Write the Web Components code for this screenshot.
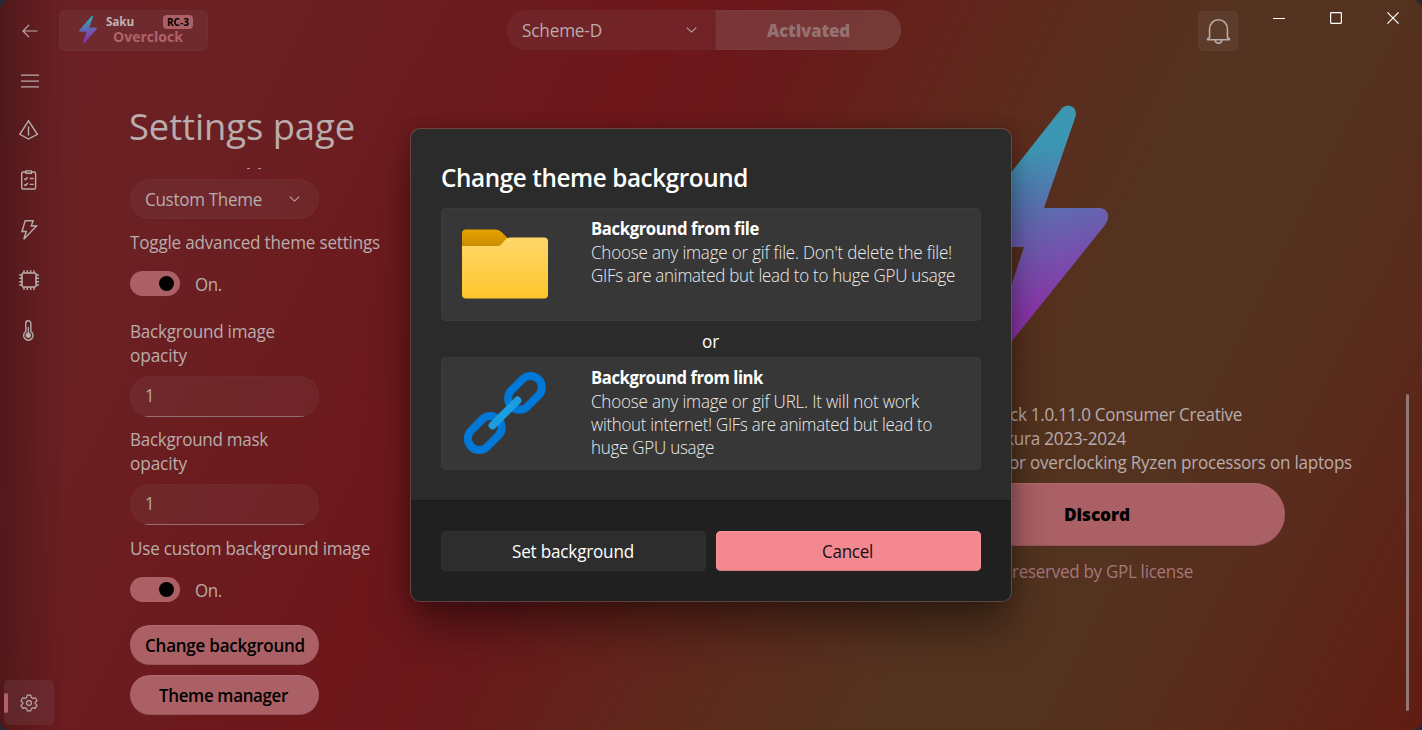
<!DOCTYPE html>
<html lang="en">
<head>
<meta charset="utf-8">
<title>Saku Overclock</title>
<style>
html,body{margin:0;height:100%;overflow:hidden;background:#262b31}
body{font-family:"Open Sans","Noto Sans",sans-serif;font-size:17.5px;line-height:24px;color:#b8acac}
</style>
</head>
<body>
<saku-window></saku-window>
<script>
const define=(name,html,Base=HTMLElement)=>{
  const t=document.createElement('template');t.innerHTML=html;
  customElements.define(name,class extends Base{
    constructor(){super();this.attachShadow({mode:'open'}).append(t.content.cloneNode(true));}
  });
};

/* One line of text set to a given advance width: part by glyph width, part by tracking. */
class FitText extends HTMLElement{
  constructor(){
    super();
    this.attachShadow({mode:'open'}).innerHTML='<style>:host{display:block;white-space:nowrap;flex:none}span{display:inline-block;transform-origin:0 50%}</style><span><slot></slot></span>';
  }
  connectedCallback(){
    const w=+this.getAttribute('w'),s=this.shadowRoot.querySelector('span');
    this.style.width=w+'px';
    const n=s.getBoundingClientRect().width;
    if(!n)return;
    const k=Math.sqrt(w/n);
    s.style.letterSpacing=((w/k-n)/this.textContent.length)+'px';
    s.style.transform=`scaleX(${k})`;
  }
}

/* Icon set, chosen with the name attribute. */
const bolt=id=>`<path fill="url(#${id})" d="M101 3C107-3 118 2 114 13L83 103H138C147 103 150 112 144 120L47 241C40 248 30 242 33 233L63 142H9C0 142-2 134 3 127Z"/>`;
const grad=id=>`<defs><linearGradient id="${id}" gradientUnits="userSpaceOnUse" x1="70" y1="45" x2="114" y2="194"><stop stop-color="#3c97b3"/><stop offset=".5" stop-color="#6663b0"/><stop offset="1" stop-color="#8a36a8"/></linearGradient></defs>`;
const ICONS={
 back:['0 0 16 14','<path d="M15.5 7H1M7 .8 1 7l6 6.2"/>'],
 menu:['0 0 20 14','<path d="M1 1.2h18M1 7.2h18M1 12.8h18"/>'],
 pyramid:['0 0 20 20','<path d="M9.5.8.8 14.3 9.5 19l8.9-4.7ZM9.5 6.5V15.5" stroke-width="1.4"/>'],
 tasks:['0 0 20 20','<path d="M6.5 2H4A1.3 1.3 0 0 0 2.7 3.3v14.4A1.3 1.3 0 0 0 4 19h11.3a1.3 1.3 0 0 0 1.3-1.3V3.3A1.3 1.3 0 0 0 15.300 2h-2.500M7 .9h5.500v2.400H7ZM5.300 8.500l1.200 1.200 2.300-2.600M10.800 8.500h3.800M5.300 14.400l1.200 1.200 2.300-2.600M10.800 14.400h3.800" stroke-width="1.4"/>'],
 flash:['0 0 20 20','<path d="M6.200.7h7.900L12.300 6h5.200L4.800 19.200 7.200 11.500H3Z" stroke-width="1.4"/>'],
 chip:['0 0 20 20','<rect x="3" y="3" width="14" height="14" rx="1.6" stroke-width="1.6"/><path d="M5 .2v3M8.300.2v3M11.700.2v3M15 .2v3M5 17v3M8.300 17v3M11.700 17v3M15 17v3M.2 5h3M.2 8.300h3M.2 11.700h3M.2 15h3M17 5h3M17 8.300h3M17 11.700h3M17 15h3" stroke-width="1.4"/>'],
 temp:['0 0 20 20','<path d="M6.800 3.200a2.500 2.500 0 0 1 5 0v8.300a4.700 4.700 0 1 1-5 0Z" stroke-width="1.4"/><circle cx="9.300" cy="15.300" r="2.700" fill="currentColor" stroke="none"/><path d="M9.300 7v8" stroke-width="1.300"/>'],
 gear:['0 0 20 20','<path d="M8 1.300h4l.6 2.600 1.700 1 2.600-.8 2 3.400-2 1.900v1.300l2 1.900-2 3.400-2.600-.8-1.700 1-.6 2.500H8l-.6-2.500-1.700-1-2.600.8-2-3.400 2-1.900V9.400l-2-1.900 2-3.400 2.600.8 1.700-1Z" stroke-width="1.300" stroke-linejoin="round"/><circle cx="10" cy="10" r="2.700" stroke-width="1.300"/>'],
 bell:['0 0 26 26','<path d="M3.700 19.800V11a9.300 9.300 0 0 1 18.600 0v8.800l2 1v.9H1.700v-.9Z" stroke-width="1.600" stroke-linejoin="round"/><path d="M9.500 22c.4 4.300 6.600 4.300 7 0" stroke-width="1.600"/>'],
 chev:['0 0 12 7','<path d="M.8.8 6 5.800 11.200.8" stroke-width="1.100"/>'],
 min:['0 0 12 12','<path d="M0 6.500h12"/>'],
 max:['0 0 12 12','<rect x=".6" y=".6" width="10.800" height="10.800" rx=".8"/>'],
 close:['0 0 12 12','<path d="M.4.400 11.600 11.600M11.600.400.400 11.600"/>'],
 bolt:['0 0 147 244',grad('g')+'<g stroke="none">'+bolt('g')+'</g>'],
 folder:['0 0 86 70','<defs><linearGradient id="a" x2="0" y2="1"><stop stop-color="#e8a200"/><stop offset="1" stop-color="#c58800"/></linearGradient><linearGradient id="b" x2="0" y2="1"><stop stop-color="#ffd76a"/><stop offset="1" stop-color="#ffc52b"/></linearGradient></defs><g stroke="none"><path fill="url(#a)" d="M0 20V4.500Q0 .500 4 .500H33.500Q37 .500 39.500 3L46 9.500 36 20Z"/><path fill="url(#b)" d="M0 17H35Q37.500 17 39 15.500L43.500 10.500Q45.500 8.500 48 8.500H82Q86 8.500 86 12.500V65.500Q86 69.500 82 69.500H4Q0 69.500 0 65.500Z"/></g>'],
 link:['0 0 82 82','<g stroke="#0078d7" stroke-width="8"><rect x="-19.200" y="-11.400" width="38.400" height="22.800" rx="11.400" transform="translate(61 20.800) rotate(-45)"/><rect x="-19.200" y="-11.400" width="38.400" height="22.800" rx="11.400" transform="translate(20.800 61) rotate(-45)"/></g><path d="M28.500 53.500 53.500 28.500" stroke="#1b9de2" stroke-width="7.800" stroke-linecap="round"/>']
};
class SakuIcon extends HTMLElement{
  constructor(){super();this.attachShadow({mode:'open'});}
  connectedCallback(){
    const [vb,d]=ICONS[this.getAttribute('name')];
    this.shadowRoot.innerHTML=`<style>:host{display:block;flex:none}svg{display:block;width:100%;height:100%;overflow:visible}</style><svg viewBox="${vb}" preserveAspectRatio="none" fill="none" stroke="currentColor" stroke-width="1.200">${d}</svg>`;
  }
}
customElements.define('saku-icon',SakuIcon);

define('saku-combo',`<style>
:host{display:flex;box-sizing:border-box;height:40px;align-items:center;justify-content:space-between;padding:0 19px 0 15px;background:rgba(128,80,85,.2);box-shadow:inset 0 0 0 1px rgba(160,120,120,.06)}
saku-icon{width:11px;height:6px;margin-top:-1px}
</style><slot></slot><saku-icon name="chev"></saku-icon>`);

define('saku-input',`<style>
:host{display:flex;box-sizing:border-box;width:189px;height:41px;border-radius:20px;align-items:center;padding:0 15px 3px;background:rgba(128,80,85,.2);box-shadow:inset 0 0 0 1px rgba(160,120,120,.06);overflow:hidden;position:relative}
i{position:absolute;left:10px;right:10px;bottom:0;height:1px;background:#947073}
</style><slot></slot><i></i>`);

define('saku-toggle',`<style>
:host{display:flex;align-items:flex-start;gap:15px;height:25px}
.t{box-sizing:border-box;width:50px;height:25px;border-radius:13px;background:#ab6065;display:flex;justify-content:flex-end;padding:5px 6px}
.k{width:15px;height:15px;border-radius:50%;background:#000}
fit-text{margin-top:1px}
</style><div class="t"><div class="k"></div></div><fit-text w="27">On.</fit-text>`);

define('saku-pill',`<style>
:host{display:flex;box-sizing:border-box;width:189px;height:40px;border-radius:20px;align-items:center;justify-content:center;background:#ab6065;box-shadow:inset 0 -1px 0 rgba(0,0,0,.12),inset 0 1px 0 rgba(255,255,255,.08);color:#000;font-weight:600}
</style><slot></slot>`);

define('saku-brand',`<style>
:host{display:flex;box-sizing:border-box;width:149px;height:41px;border-radius:6px;padding:5px 15px 0 20px;background:rgba(130,85,90,.2);box-shadow:inset 0 0 0 1px rgba(160,120,120,.07)}
saku-icon{width:18px;height:27px;margin:1px 9px 0 0}
.c{flex:1}
.r{display:flex;justify-content:space-between;height:14px;align-items:center}
.s{font:700 12px/14px "Open Sans",sans-serif;color:#beb2b2}
.b{height:14px;border-radius:4px;background:#ab6065;color:#000;font:700 10px/14px "Open Sans",sans-serif;padding:0 4px}
.o{font:700 14px/16px "Open Sans",sans-serif;color:#b0636a;margin:0 0 0 7px}
</style><saku-icon name="bolt"></saku-icon><div class="c"><div class="r"><fit-text class="s" w="28">Saku</fit-text><fit-text class="b" w="22">RC-3</fit-text></div><fit-text class="o" w="70">Overclock</fit-text></div>`);

define('saku-header',`<style>
:host{display:grid;grid-template-columns:59px 149px 299px 209px 185px 297px 40px 1fr;height:62px;align-items:start}
.back{width:16px;height:14px;margin:24px 0 0 22px}
saku-brand{margin-top:10px}
saku-combo{grid-column:4;margin-top:10px;border-radius:20px 0 0 20px}
.act{grid-column:5;margin-top:10px;height:40px;border-radius:0 20px 20px 0;background:rgba(145,105,105,.36);box-shadow:inset 0 0 0 1px rgba(160,120,120,.07);display:flex;align-items:center;justify-content:center;padding-bottom:1px;box-sizing:border-box;font-weight:800;color:#957171}
.bell{grid-column:7;margin-top:11px;height:40px;border-radius:5px;background:rgba(130,100,90,.2);box-shadow:inset 0 0 0 1px rgba(160,120,120,.06);display:flex;align-items:center;justify-content:center}
.bell saku-icon{width:25px;height:26px}
.win{display:flex;color:#fff;padding-left:12px}
.win div{width:57px;height:36px;display:flex;align-items:center;justify-content:center}
.win saku-icon{width:12px;height:12px}
</style><saku-icon class="back" name="back"></saku-icon><saku-brand></saku-brand>
<saku-combo><fit-text w="80">Scheme-D</fit-text></saku-combo>
<div class="act"><fit-text w="83">Activated</fit-text></div>
<div class="bell"><saku-icon name="bell"></saku-icon></div>
<div class="win"><div><saku-icon name="min"></saku-icon></div><div><saku-icon name="max"></saku-icon></div><div><saku-icon name="close"></saku-icon></div></div>`);

define('saku-nav',`<style>
:host{display:flex;flex-direction:column;width:59px;padding:3px 0 5px 4px;box-sizing:border-box}
.i{width:50px;height:45px;margin-bottom:5px;display:flex;align-items:center;justify-content:center}
.i saku-icon{width:20px;height:20px}
.i .m{width:20px;height:14px;margin:0 0 14px 2px}
.sel{margin:auto 0 0;border-radius:5px;background:rgba(130,85,90,.24);justify-content:flex-start}
.sel b{width:4px;height:20px;border-radius:2px;background:#b0636a}
.sel saku-icon{width:18px;height:18px;margin-left:12px}
</style><div class="i"><saku-icon class="m" name="menu"></saku-icon></div><div class="i" style="margin-top:-8px"><saku-icon name="pyramid"></saku-icon></div><div class="i"><saku-icon name="tasks"></saku-icon></div><div class="i"><saku-icon name="flash"></saku-icon></div><div class="i"><saku-icon name="chip"></saku-icon></div><div class="i"><saku-icon name="temp"></saku-icon></div><div class="i sel"><b></b><saku-icon name="gear"></saku-icon></div>`);

define('saku-settings',`<style>
:host{display:block;width:780px;padding:40px 0 0 71px;box-sizing:border-box}
h1{margin:0 0 1px -1px;font-size:36.500px;line-height:48px;font-weight:400;color:#b9adad}
.clip{display:flex;gap:8px;padding:17px 0 10px 117px;height:1px;box-sizing:content-box}
.clip i{width:3px;height:1px;background:#ab9698}
saku-combo{width:189px;border-radius:20px;margin-bottom:11px}
saku-toggle{margin:17px 0 23px}
saku-input{margin:9px 0 10px}
.p{margin-bottom:10px}
</style><h1><fit-text w="226">Settings page</fit-text></h1>
<div class="clip"><i></i><i></i></div>
<saku-combo><fit-text w="117">Custom Theme</fit-text></saku-combo>
<fit-text w="250">Toggle advanced theme settings</fit-text>
<saku-toggle></saku-toggle>
<fit-text w="145">Background image</fit-text><fit-text w="57">opacity</fit-text>
<saku-input><fit-text w="9">1</fit-text></saku-input>
<fit-text w="138">Background mask</fit-text><fit-text w="57">opacity</fit-text>
<saku-input style="margin-bottom:11px"><fit-text w="9">1</fit-text></saku-input>
<fit-text w="240">Use custom background image</fit-text>
<saku-toggle></saku-toggle>
<saku-pill class="p"><fit-text w="160">Change background</fit-text></saku-pill>
<saku-pill><fit-text w="129" style="margin-right:2px">Theme manager</fit-text></saku-pill>`);

define('saku-about',`<style>
:host{display:block;flex:1;padding-top:43px;box-sizing:border-box}
.logo{width:147px;height:244px;margin:0 0 53px 122px}
saku-pill{width:376px;height:63px;border-radius:32px;margin:9px 0 13px 70px;padding-bottom:1px;font-weight:800}
</style><saku-icon class="logo" name="bolt"></saku-icon>
<fit-text w="232" style="margin-left:171px">ck 1.0.11.0 Consumer Creative</fit-text>
<fit-text w="121" style="margin-left:166px">kura 2023-2024</fit-text>
<fit-text w="343" style="margin-left:170px">or overclocking Ryzen processors on laptops</fit-text>
<saku-pill><fit-text w="66">Discord</fit-text></saku-pill>
<fit-text w="181" style="margin-left:173px;color:#a5767a">reserved by GPL license</fit-text>`);

define('source-card',`<style>
:host{display:flex;box-sizing:border-box;height:113px;padding:9px 20px;border-radius:5px;background:#373737;box-shadow:inset 0 0 0 1px #3b3b3b;color:#ececec;font-weight:300;line-height:23.400px}
.pic{width:130px}
.t{margin-top:.1px}
::slotted([slot=title]){font-weight:700;color:#fff}
</style><div class="pic"><slot name="icon"></slot></div><div class="t"><slot name="title"></slot><slot></slot></div>`);

define('theme-dialog',`<style>
:host{position:absolute;left:410px;top:128px;width:602px;height:474px;box-sizing:border-box;border:1px solid rgba(125,105,100,.55);border-radius:10px;background:#2b2b2b;background-clip:padding-box;box-shadow:0 28px 44px -4px rgba(0,0,0,.42),0 0 16px rgba(0,0,0,.2);overflow:hidden;display:flex;flex-direction:column;color:#fff}
.body{box-sizing:border-box;padding:32px 30px 0;height:371px}
h2{margin:0 0 15px;font-size:25px;line-height:32px;font-weight:600}
.or{height:36px;display:flex;justify-content:center;align-items:center;padding:3px 1px 0 0;box-sizing:border-box}
.foot{flex:1;background:#202020;border-top:1px solid #1b1b1b;padding:30px 30px 0;display:grid;grid-template-columns:265px 265px;gap:10px;align-items:start}
.foot div{height:40px;border-radius:5px;display:flex;align-items:center;justify-content:center;background:#2d2d2d;box-shadow:inset 0 0 0 1px #323232;padding-right:1px;box-sizing:border-box}
.foot .c{background:#f38890;box-shadow:inset 0 -1px 0 #d97b82,inset 0 0 0 1px #f5949b;color:#181010;padding-right:3px}
.f{width:86px;height:70px;margin:11.500px 0 0 1px}
.l{width:82px;height:82px;margin:5.500px 0 0 2.500px}
</style><div class="body"><h2><fit-text w="307">Change theme background</fit-text></h2>
<source-card><saku-icon slot="icon" class="f" name="folder"></saku-icon><fit-text slot="title" w="168">Background from file</fit-text><fit-text w="361">Choose any image or gif file. Don't delete the file!</fit-text><fit-text w="364">GIFs are animated but lead to to huge GPU usage</fit-text></source-card>
<div class="or"><fit-text w="17">or</fit-text></div>
<source-card><saku-icon slot="icon" class="l" name="link"></saku-icon><fit-text slot="title" w="172">Background from link</fit-text><fit-text w="328">Choose any image or gif URL. It will not work</fit-text><fit-text w="341">without internet! GIFs are animated but lead to</fit-text><fit-text w="123">huge GPU usage</fit-text></source-card></div>
<div class="foot"><div><fit-text w="122">Set background</fit-text></div><div class="c"><fit-text w="51">Cancel</fit-text></div></div>`);

define('saku-window',`<style>
:host{display:flex;flex-direction:column;position:relative;width:1422px;height:730px;overflow:hidden;border-radius:10px;
background:linear-gradient(90deg,rgba(0,0,0,.24),rgba(0,0,0,.1) 36px,transparent 66px),linear-gradient(117deg,#6a2024,#6b2023 15%,#6c1a1d 30%,#6e171b 38%,#6a191b 45%,#64221b 52%,#5c2b1d 60%,#53331f 70%,#53331f 77%,#592b1c 87%,#602014 97%,#621b13)}
.main{display:flex;flex:1;min-height:0}
.bar{width:3px;margin:332px 13px 19px 0;background:#927874;border-radius:2px}
</style><saku-header></saku-header><div class="main"><saku-nav></saku-nav><saku-settings></saku-settings><saku-about></saku-about><div class="bar"></div></div><theme-dialog></theme-dialog>`);

customElements.define('fit-text',FitText);
</script>
</body>
</html>
